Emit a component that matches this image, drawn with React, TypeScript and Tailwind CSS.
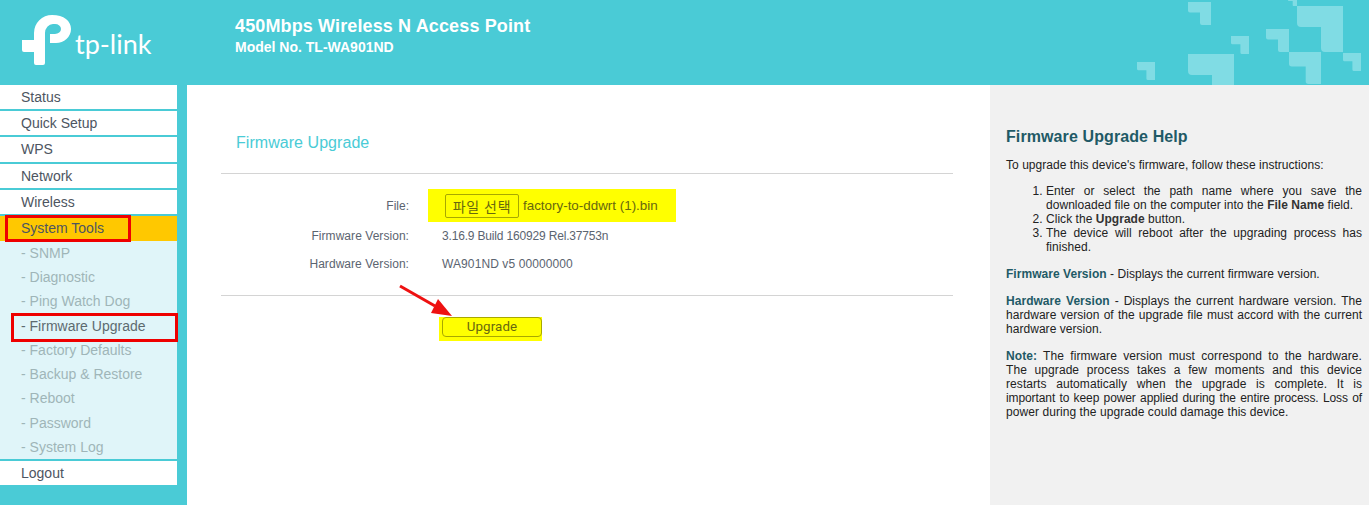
const top = ["Status", "Quick Setup", "WPS", "Network", "Wireless"];
const subs = ["SNMP", "Diagnostic", "Ping Watch Dog", "Firmware Upgrade", "Factory Defaults", "Backup & Restore", "Reboot", "Password", "System Log"];

function Logo() {
  return (
    <svg width="52" height="54" viewBox="21 13 52 54" className="shrink-0 block" fill="#fff">
      <path d="M22 40H34V33A18 18 0 0 1 52 15C64 15 71 21 71 29C71 37 64 43 56 43H50V34H55a6 5 0 0 0 0-10H53a8 9 0 0 0-8 9V63a2 2 0 0 1-2 2H36a2 2 0 0 1-2-2V52H24a2 2 0 0 1-2-2Z" />
    </svg>
  );
}

function Corner({ size, className }: { size: number; className: string }) {
  return (
    <svg width={size} height={size} viewBox="0 0 46 46" className={"absolute " + className} fill="#80dce4">
      <path d="M0 0H46V46H28a4 4 0 0 1-4-4V21H4a4 4 0 0 1-4-4Z" />
    </svg>
  );
}

export default function App() {
  return (
    <div className="h-[505px] w-[1369px] overflow-hidden bg-white font-['Liberation_Sans',Arial,sans-serif] flex flex-col relative">
      <header className="h-[85px] bg-[#4acbd6] relative overflow-hidden flex shrink-0">
        <div className="w-[235px] shrink-0 flex items-start pl-[21px] pt-[13px]">
          <Logo />
          <span className="font-['Lato',sans-serif] font-normal text-[27px] text-white leading-none mt-[17px] ml-[2px]">tp-link</span>
        </div>
        <div className="text-white font-bold pt-[15px]">
          <div className="text-[18px] leading-[22px] tracking-[0.13px]">450Mbps Wireless N Access Point</div>
          <div className="text-[14px] leading-[18px] mt-[1px]">Model No. TL-WA901ND</div>
        </div>
        <Corner size={23} className="left-[1188px] top-[2px]" />
        <Corner size={18} className="left-[1231px] top-[36px]" />
        <Corner size={18} className="left-[1137px] top-[62px]" />
        <Corner size={46} className="left-[1188px] top-[54px]" />
        <Corner size={23} className="left-[1266px] top-[29px]" />
        <Corner size={46} className="left-[1297px] top-[6px]" />
        <Corner size={32} className="left-[1289px] top-[52px]" />
        <Corner size={18} className="left-[1343px] top-[53px]" />
        <Corner size={9} className="left-[1288px] top-[-3px]" />
      </header>
      <div className="flex flex-1 min-h-0">
        <nav className="w-[187px] bg-[#4acbd6] shrink-0 pr-[10px] text-[14px] leading-[24px]">
          {top.map((t) => (
            <div key={t} className="h-[26.2px] border-b-2 border-[#4acbd6] bg-white bg-clip-padding pl-[21px] text-[#4d5561]">{t}</div>
          ))}
          <div className="h-[25px] bg-[#ffc800] pl-[21px] text-[#4d5561]">System Tools</div>
          <div className="bg-[#e0f5f9] h-[220px] border-b-2 border-[#4acbd6]">
            {subs.map((s) => (
              <div key={s} className={"h-[24.25px] pl-[21px] " + (s === "Firmware Upgrade" ? "text-[#5d6b70]" : "text-[#9fb5b8]")}>- {s}</div>
            ))}
          </div>
          <div className="h-[24px] bg-white pl-[21px] text-[#4d5561]">Logout</div>
        </nav>
        <main className="w-[803px] shrink-0 pl-[34px] pr-[37px] text-[12px] text-[#5b6470]">
          <h1 className="text-[16px] leading-[20px] text-[#4acbd6] pl-[15px] pt-[48px] tracking-[0.05px]">Firmware Upgrade</h1>
          <div className="h-px bg-[#d4d4d4] mt-[20px]" />
          <div className="flex items-center h-[30px] mt-[17px]">
            <div className="w-[188px] text-right">File:</div>
            <div className="ml-[19px] -mt-[2px] w-[248px] h-[33px] bg-[#ffff00] flex items-center pl-[17px] text-[#68680f]">
              <span className="mt-[2px] h-[24px] w-[74px] border border-[#a8a800] rounded-[2px] text-[14px] font-['Noto_Sans_CJK_KR',sans-serif] flex items-center justify-center tracking-[0.8px]">파일 선택</span>
              <span className="ml-[4px] mt-[2px] text-[13.400px]">factory-to-ddwrt (1).bin</span>
            </div>
          </div>
          <div className="flex items-center h-[28px] mt-[1px]">
            <div className="w-[188px] text-right tracking-[0.05px]">Firmware Version:</div>
            <div className="ml-[33px] tracking-[-0.17px]">3.16.9 Build 160929 Rel.37753n</div>
          </div>
          <div className="flex items-center h-[28px]">
            <div className="w-[188px] text-right tracking-[0.05px]">Hardware Version:</div>
            <div className="ml-[33px] tracking-[0.1px]">WA901ND v5 00000000</div>
          </div>
          <div className="h-px bg-[#d4d4d4] mt-[17px]" />
          <div className="ml-[218px] mt-[21px] w-[103px] h-[24px] bg-[#ffff00] flex items-start">
            <button className="ml-[3px] w-[100px] h-[20px] border border-[#a8a800] rounded-[4px] text-[13.330px] tracking-[0.1px] text-[#68680f] font-['Roboto',sans-serif] leading-none">Upgrade</button>
          </div>
        </main>
        <aside className="flex-1 bg-[#f1f1f1] pl-[16px] pr-[7px] text-[12px] leading-[14px] text-[#222] tracking-[0.04px]">
          <h2 className="text-[16px] leading-[20px] font-bold text-[#1f5a66] mt-[42px] tracking-[0.1px]">Firmware Upgrade Help</h2>
          <p className="mt-[11px]">To upgrade this device's firmware, follow these instructions:</p>
          <ol className="list-decimal pl-[40px] mt-[12px] text-justify">
            <li>Enter or select the path name where you save the downloaded file on the computer into the <b className="text-[#333]">File Name</b> field.</li>
            <li>Click the <b className="text-[#333]">Upgrade</b> button.</li>
            <li>The device will reboot after the upgrading process has finished.</li>
          </ol>
          <p className="mt-[13px]"><b className="text-[#1f5a66]">Firmware Version</b> - Displays the current firmware version.</p>
          <p className="mt-[13px] text-justify"><b className="text-[#1f5a66]">Hardware Version</b> - Displays the current hardware version. The hardware version of the upgrade file must accord with the current hardware version.</p>
          <p className="mt-[13px] text-justify tracking-[0.07px]"><b className="text-[#1f5a66]">Note:</b> The firmware version must correspond to the hardware. The upgrade process takes a few moments and this device restarts automatically when the upgrade is complete. It is <span className="tracking-[-0.1px]">important to keep power applied during the entire process. Loss of</span> power during the upgrade could damage this device.</p>
        </aside>
      </div>
      <div className="absolute left-[5px] top-[215px] w-[126px] h-[27px] border-[3px] border-[#ee0000]" />
      <div className="absolute left-[11px] top-[313px] w-[167px] h-[29px] border-[3px] border-[#ee0000]" />
      <svg className="absolute left-[395px] top-[280px]" width="60" height="50" viewBox="0 0 60 50">
        <path d="M5 6 L40 26" stroke="#ee1111" strokeWidth="3" fill="none" />
        <path d="M43 19 L57 36 L36 33 Z" fill="#ee1111" />
      </svg>
    </div>
  );
}
